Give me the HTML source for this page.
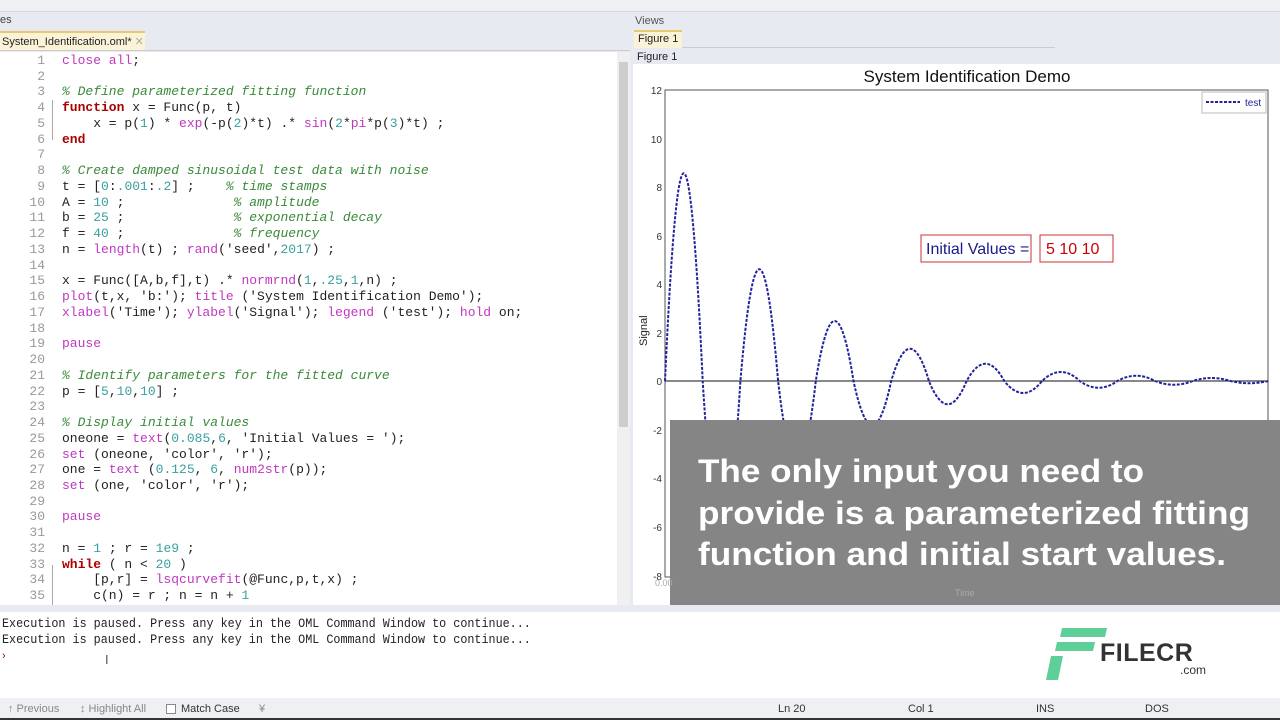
<!DOCTYPE html>
<html><head><meta charset="utf-8"><style>
*{margin:0;padding:0;box-sizing:border-box}
body{width:1280px;height:720px;overflow:hidden;background:#e7eaf0;font-family:"Liberation Sans",sans-serif;position:relative}
.abs{position:absolute}
#code{left:0;top:52px;width:617px;height:553px;background:#fff;overflow:hidden}
.ln{position:absolute;left:0;width:45px;text-align:right;color:#999;font:13px "Liberation Mono",monospace}
.cd{position:absolute;left:62px;font:13px "Liberation Mono",monospace;color:#222;white-space:pre}
.k{color:#c038c0}.c{color:#3a8a3a;font-style:italic}.n{color:#3aa0a0}.f{color:#a00;font-weight:bold}
.cw{font:12.5px "Liberation Mono",monospace;color:#222;transform:scaleX(0.94);transform-origin:left;white-space:pre}
</style></head><body>
<div class="abs" style="left:0;top:0;width:1280px;height:12px;background:#eef0f4;border-bottom:1px solid #d5d8de"></div>
<div class="abs" style="left:0;top:14px;font-size:11px;color:#444">es</div>
<div class="abs" style="left:0;top:31px;width:145px;height:20px;background:#fbf3d8;border-top:2px solid #e8c870;font-size:11px;color:#222;padding:2px 2px;white-space:nowrap">System_Identification.oml* <span style="color:#aaa">✕</span></div>
<div class="abs" style="left:0;top:50px;width:630px;height:1px;background:#ccc"></div>
<div id="code" class="abs"></div>
<div class="abs" style="left:617px;top:52px;width:13px;height:553px;background:#f0f0f0"><div style="margin:10px 2px;height:365px;background:#cdcdcd"></div></div>
<div class="abs" style="left:52px;top:100px;width:1px;height:40px;background:#aaa"></div>
<div class="abs" style="left:52px;top:565px;width:1px;height:40px;background:#aaa"></div>

<div class="abs" style="left:635px;top:15px;font-size:11px;color:#555">Views</div>
<div class="abs" style="left:634px;top:30px;width:48px;height:18px;background:#fbf3d8;border-top:2px solid #e8c870;font-size:11px;color:#222;padding:1px 4px;white-space:nowrap">Figure 1</div>
<div class="abs" style="left:682px;top:47px;width:373px;height:1px;background:#ccc"></div>
<div class="abs" style="left:637px;top:51px;font-size:11px;color:#222">Figure 1</div>
<div class="abs" style="left:633px;top:64px;width:647px;height:541px;background:#fff"></div>
<svg class="abs" style="left:0;top:0" width="1280" height="720">
<text x="967" y="82" font-size="17" text-anchor="middle" font-family="Liberation Sans" fill="#111">System Identification Demo</text>
<rect x="665" y="90" width="603" height="487" fill="none" stroke="#555" stroke-width="1"/>
<line x1="665" y1="381" x2="1268" y2="381" stroke="#111"/>
<g font-size="10" font-family="Liberation Sans" fill="#333" text-anchor="end">
<text x="662" y="94">12</text><text x="662" y="143">10</text><text x="662" y="191">8</text><text x="662" y="240">6</text><text x="662" y="288">4</text><text x="662" y="337">2</text><text x="662" y="385">0</text><text x="662" y="434">-2</text><text x="662" y="482">-4</text><text x="662" y="531">-6</text><text x="662" y="580">-8</text></g>
<text x="0" y="0" font-size="11" font-family="Liberation Sans" fill="#222" transform="translate(647,346) rotate(-90)">Signal</text>
<rect x="1202" y="92" width="64" height="21" fill="#fff" stroke="#bbb"/>
<line x1="1206" y1="102" x2="1240" y2="102" stroke="#22229a" stroke-width="2" stroke-dasharray="3 1.5"/>
<text x="1245" y="106" font-size="10" fill="#22229a" font-family="Liberation Sans">test</text>
<path fill="none" stroke="#22229a" stroke-width="2" stroke-dasharray="3 1.5" d="M665,381 C677.6,104 689.8,104 702.7,381 C715.3,584 727.8,584 740.4,381 C753,232 765.5,232 778.1,381 C790.7,490 803.2,490 815.8,381 C828.4,301 840.9,301 853.5,381 C866.1,440 878.6,440 891.2,381 C903.8,338 916.3,338 928.9,381 C941.5,412 954,412 966.6,381 C979.2,358 991.7,358 1004.3,381 C1016.9,397 1029.4,397 1042,381 C1054.6,369 1067.1,369 1079.7,381 C1092.3,390 1104.8,390 1117.4,381 C1130,374 1142.5,374 1155.1,381 C1167.7,386 1180.2,386 1192.8,381 C1205.4,377 1217.9,377 1230.5,381 C1243.1,384 1255.6,384 1268.2,381"/>
<rect x="921" y="235" width="110" height="27" fill="#fff" stroke="#c33"/>
<text x="926" y="254" font-size="16" fill="#1a1a8a" font-family="Liberation Sans">Initial Values =</text>
<rect x="1040" y="235" width="73" height="27" fill="#fff" stroke="#c33"/>
<text x="1046" y="254" font-size="16" fill="#c00" font-family="Liberation Sans">5  10  10</text>
<rect x="670" y="420" width="610" height="185" fill="#858585"/>
<g font-size="9" fill="#aaa" font-family="Liberation Sans"><text x="655" y="586">0.00</text><text x="955" y="596">Time</text></g>
<g font-size="32" font-weight="bold" fill="#fff" font-family="Liberation Sans">
<text x="698" y="482" textLength="446" lengthAdjust="spacingAndGlyphs">The only input you need to</text>
<text x="698" y="524" textLength="552" lengthAdjust="spacingAndGlyphs">provide is a parameterized fitting</text>
<text x="698" y="565" textLength="528" lengthAdjust="spacingAndGlyphs">function and initial start values.</text></g>
</svg>

<div class="abs" style="left:0;top:612px;width:1280px;height:86px;background:#fff"></div>
<div class="abs cw" style="left:2px;top:617px">Execution is paused. Press any key in the OML Command Window to continue...</div>
<div class="abs cw" style="left:2px;top:633px">Execution is paused. Press any key in the OML Command Window to continue...</div>
<div class="abs" style="left:2px;top:650px;font-size:11px;color:#808">›</div>
<div class="abs" style="left:105px;top:652px;font-size:13px;color:#555">I</div>
<svg class="abs" style="left:1045px;top:628px" width="65" height="55"><polygon points="17,0 62,0 60,9 15,9" fill="#5fcf9a"/><polygon points="12,14 50,14 48,23 10,23" fill="#5fcf9a"/><polygon points="6,28 18,28 13,52 1,52" fill="#5fcf9a"/></svg>
<div class="abs" style="left:1100px;top:639px;font-size:25px;font-weight:bold;color:#333;letter-spacing:0.5px">FILECR</div>
<div class="abs" style="left:1180px;top:663px;font-size:12px;color:#333">.com</div>
<div class="abs" style="left:0;top:698px;width:1280px;height:22px;background:#eef0f4;font-size:11px;color:#333">
<span class="abs" style="left:8px;top:5px;color:#888">↑ Previous</span><span class="abs" style="left:80px;top:5px;color:#888">↕ Highlight All</span>
<span class="abs" style="left:166px;top:6px;width:10px;height:10px;border:1px solid #888;background:#fff"></span><span class="abs" style="left:181px;top:5px">Match Case</span><span class="abs" style="left:259px;top:5px;color:#888">¥</span>
<span class="abs" style="left:778px;top:5px">Ln 20</span><span class="abs" style="left:908px;top:5px">Col 1</span><span class="abs" style="left:1036px;top:5px">INS</span><span class="abs" style="left:1145px;top:5px">DOS</span></div>
<div class="abs" style="left:0;top:718px;width:1280px;height:2px;background:#333"></div>

<script>
var L=[
'<span class="k">close all</span>;','',
'<span class="c">% Define parameterized fitting function</span>',
'<span class="f">function</span> x = Func(p, t)',
'    x = p(<span class="n">1</span>) * <span class="k">exp</span>(-p(<span class="n">2</span>)*t) .* <span class="k">sin</span>(<span class="n">2</span>*<span class="k">pi</span>*p(<span class="n">3</span>)*t) ;',
'<span class="f">end</span>','',
'<span class="c">% Create damped sinusoidal test data with noise</span>',
't = [<span class="n">0</span>:<span class="n">.001</span>:<span class="n">.2</span>] ;    <span class="c">% time stamps</span>',
'A = <span class="n">10</span> ;              <span class="c">% amplitude</span>',
'b = <span class="n">25</span> ;              <span class="c">% exponential decay</span>',
'f = <span class="n">40</span> ;              <span class="c">% frequency</span>',
'n = <span class="k">length</span>(t) ; <span class="k">rand</span>(\'seed\',<span class="n">2017</span>) ;','',
'x = Func([A,b,f],t) .* <span class="k">normrnd</span>(<span class="n">1</span>,<span class="n">.25</span>,<span class="n">1</span>,n) ;',
'<span class="k">plot</span>(t,x, \'b:\'); <span class="k">title</span> (\'System Identification Demo\');',
'<span class="k">xlabel</span>(\'Time\'); <span class="k">ylabel</span>(\'Signal\'); <span class="k">legend</span> (\'test\'); <span class="k">hold</span> on;','',
'<span class="k">pause</span>','',
'<span class="c">% Identify parameters for the fitted curve</span>',
'p = [<span class="n">5</span>,<span class="n">10</span>,<span class="n">10</span>] ;','',
'<span class="c">% Display initial values</span>',
'oneone = <span class="k">text</span>(<span class="n">0.085</span>,<span class="n">6</span>, \'Initial Values = \');',
'<span class="k">set</span> (oneone, \'color\', \'r\');',
'one = <span class="k">text</span> (<span class="n">0.125</span>, <span class="n">6</span>, <span class="k">num2str</span>(p));',
'<span class="k">set</span> (one, \'color\', \'r\');','',
'<span class="k">pause</span>','',
'n = <span class="n">1</span> ; r = <span class="n">1e9</span> ;',
'<span class="f">while</span> ( n &lt; <span class="n">20</span> )',
'    [p,r] = <span class="k">lsqcurvefit</span>(@Func,p,t,x) ;',
'    c(n) = r ; n = n + <span class="n">1</span>'];
var h='';for(var i=0;i<L.length;i++){var y=1+i*15.74;h+='<div class="ln" style="top:'+y+'px">'+(i+1)+'</div><div class="cd" style="top:'+y+'px">'+L[i]+'</div>';}
document.getElementById('code').innerHTML=h;
</script>
</body></html>
